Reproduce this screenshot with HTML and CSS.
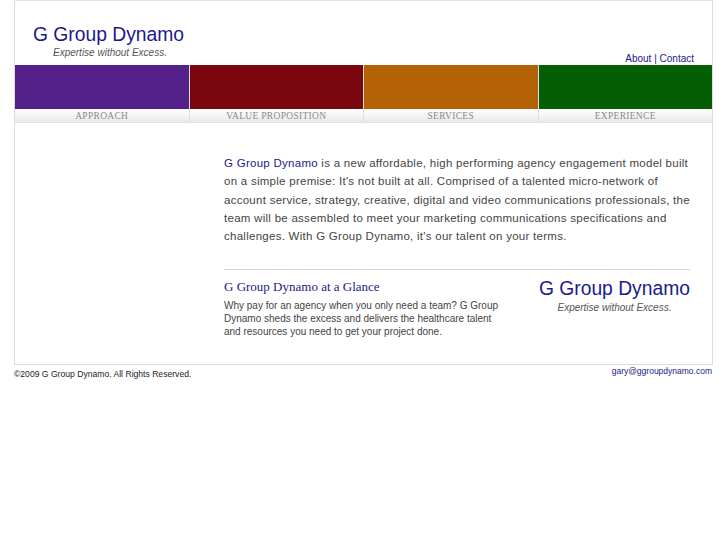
FILE: index.html
```html
<!DOCTYPE html>
<html>
<head>
<meta charset="utf-8">
<link rel="stylesheet" href="styles.css">
</head>
<body>
<div class="page">
  <header class="header">
    <div class="brand">
      <div class="logo">G Group Dynamo</div>
      <div class="tagline">Expertise without Excess.</div>
    </div>
    <nav class="toplinks"><a href="#">About</a> | <a href="#">Contact</a></nav>
  </header>
  <div class="tabs">
    <div class="tab"><div class="bar purple"></div><div class="label">APPROACH</div></div>
    <div class="tab"><div class="bar red"></div><div class="label">VALUE PROPOSITION</div></div>
    <div class="tab"><div class="bar orange"></div><div class="label">SERVICES</div></div>
    <div class="tab"><div class="bar green"></div><div class="label">EXPERIENCE</div></div>
  </div>
  <main class="main">
    <div class="side"></div>
    <div class="content">
      <p class="intro"><span class="brandname">G Group Dynamo</span> is a new affordable, high performing agency engagement model built<br>on a simple premise: It's not built at all. Comprised of a talented micro-network of<br>account service, strategy, creative, digital and video communications professionals, the<br>team will be assembled to meet your marketing communications specifications and<br>challenges. With G Group Dynamo, it's our talent on your terms.</p>
      <div class="lower">
        <div class="glance">
          <h2>G Group Dynamo at a Glance</h2>
          <p>Why pay for an agency when you only need a team? G Group<br>Dynamo sheds the excess and delivers the healthcare talent<br>and resources you need to get your project done.</p>
        </div>
        <div class="brand2">
          <div class="logo2">G Group Dynamo</div>
          <div class="tagline2">Expertise without Excess.</div>
        </div>
      </div>
    </div>
  </main>
</div>
<footer class="footer">
  <div class="copy">©2009 G Group Dynamo. All Rights Reserved.</div>
  <a class="email" href="#">gary@ggroupdynamo.com</a>
</footer>
</body>
</html>
```
FILE: styles.css
```css
html, body { margin: 0; padding: 0; background: #fff; }
body { font-family: "Liberation Sans", Arial, sans-serif; }
.page {
  margin-left: 14px;
  width: 697px;
  height: 363px;
  border: 1px solid #dcdcdc;
  border-top-color: #e4e4e4;
  box-sizing: content-box;
}
.header {
  height: 64px;
  display: flex;
  justify-content: space-between;
  align-items: flex-start;
}
.brand { padding: 23px 0 0 18px; }
.logo { font-size: 19.3px; color: #1a1a8c; line-height: 22px; }
.tagline { font-size: 10px; font-style: italic; color: #555; margin: 1px 0 0 20px; }
.toplinks { padding: 52px 18px 0 0; font-size: 10px; color: #1a1a8c; }
.toplinks a { color: #1a1a8c; text-decoration: none; }
.tabs { display: flex; }
.tab { flex: 1; border-left: 1px solid #e0e0e0; }
.tab:first-child { border-left: none; }
.bar { height: 44px; }
.purple { background: #54218a; }
.red { background: #7a0710; }
.orange { background: #b36305; }
.green { background: #045e04; }
.label {
  height: 13px;
  background: linear-gradient(#ffffff, #e9e9e9);
  border-bottom: 1px solid #e2e2e2;
  font-family: "Liberation Serif", "Times New Roman", serif;
  font-size: 9.5px;
  line-height: 14px;
  color: #8a8a8a;
  text-align: center;
  letter-spacing: 0.3px;
}
.main { display: flex; }
.side { width: 209px; }
.content { width: 466px; padding-top: 31px; }
.intro {
  margin: 0;
  font-size: 11.5px;
  line-height: 18.3px;
  color: #444;
  letter-spacing: 0.27px;
  white-space: nowrap;
}
.brandname { color: #1a1a8c; }
.lower {
  margin-top: 24px;
  border-top: 1px solid #d4d4d4;
  display: flex;
  justify-content: space-between;
}
.glance h2 {
  margin: 9px 0 0 0;
  font-family: "Liberation Serif", "Times New Roman", serif;
  font-weight: normal;
  font-size: 13px;
  color: #1a1a8c;
  line-height: 16px;
}
.glance p {
  margin: 4px 0 0 0;
  font-size: 10px;
  line-height: 13px;
  color: #444;
  white-space: nowrap;
}
.brand2 { padding-top: 8px; text-align: center; }
.logo2 { font-size: 19.3px; color: #1a1a8c; line-height: 22px; }
.tagline2 { font-size: 10px; font-style: italic; color: #555; margin-top: 2px; }
.footer {
  margin-left: 14px;
  width: 698px;
  display: flex;
  justify-content: space-between;
  align-items: flex-start;
}
.copy { font-size: 8.6px; color: #222; padding-top: 4px; }
.email { font-size: 8.5px; color: #1a1a8c; text-decoration: none; padding-top: 1px; }
```
